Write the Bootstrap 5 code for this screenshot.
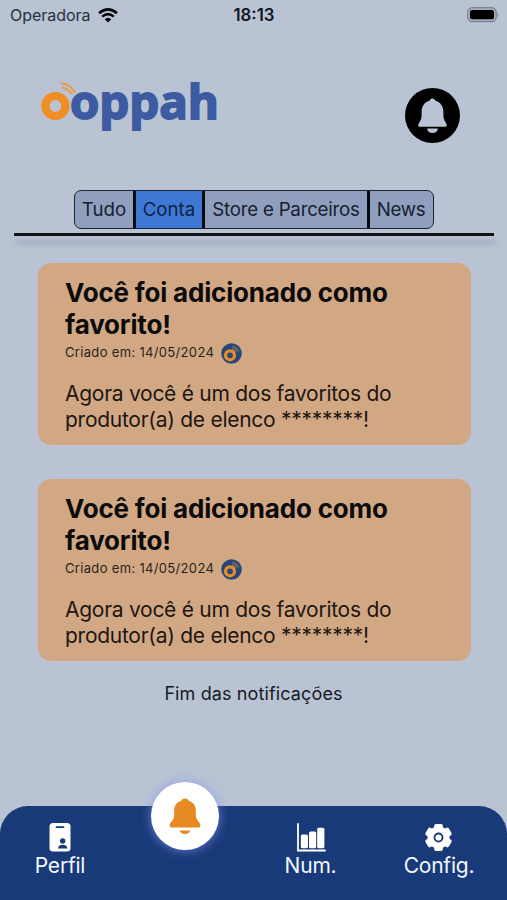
<!DOCTYPE html>
<html lang="pt-BR">
<head>
<meta charset="utf-8">
<meta name="viewport" content="width=device-width, initial-scale=1">
<title>Notificações</title>
<link href="https://cdn.jsdelivr.net/npm/bootstrap@5.3.0/dist/css/bootstrap.min.css" rel="stylesheet">
<style>
body{font-family:Inter,"Liberation Sans",sans-serif;background:#b9c3d3;color:#0b1119;width:507px;height:900px;overflow:hidden}
svg{display:block;flex:none}
.status-bar{height:30px;padding:0 8px 0 10px;font-size:16px;line-height:30px}
.status-bar>div{flex:1 1 0}
.carrier{letter-spacing:-.02px;color:#27303c}
.wifi{margin-left:7px}
.clock{font-weight:600;font-size:16.8px;text-align:center;color:#10151d;padding-right:1px}
.brand-row{height:160px;padding:24px 47px 0 38px}
.alert-icon{margin-top:34px}
.tabs-row{height:39px;margin-left:74px;width:360px}
.tabs-box{border:1.5px solid #1b2531;border-radius:7px;overflow:hidden;background:#909fbe;width:360px}
.tab-item{font-size:18.7px;line-height:37px;text-align:center;border-left:3px solid #05090f;color:#152031;white-space:nowrap;background:none;padding:0}
.tab-item:first-child{border-left:0;width:58px}
.tab-2{width:69px;background:#3c78d4;color:#0f2343}
.tab-3{width:165px;letter-spacing:-.22px}
.tab-4{width:65px;letter-spacing:-.3px}
.rule{height:3px;margin:4px 13px 0 14px;background:#0c1418;box-shadow:2px 8px 4px rgba(130,138,160,.5)}
.notice{width:433px;height:182px;margin-left:38px;border-radius:13px;background:#d2a884;padding:14px 27px 0;color:#0b0b0c}
.notice-title{font-size:26px;font-weight:700;line-height:31.5px;letter-spacing:-.18px;margin:0;white-space:nowrap}
.notice-date{font-size:13px;letter-spacing:.33px;height:25px;color:#2a1f18}
.notice-icon{margin:2px 0 0 7px}
.notice-text{font-size:21px;line-height:26px;letter-spacing:-.27px;margin:16px 0 0;white-space:nowrap;color:#1d1611}
.gap-first{margin-top:27px}
.gap-next{margin-top:34px}
.end-text{font-size:18px;line-height:24px;letter-spacing:.12px;margin-top:21px;text-align:center;color:#151b24}
.bottom-bar{height:94px;border-radius:28px 28px 0 0;background:#193a78;color:#f3f7ff;font-size:21px}
.bar-item{padding-top:16px;line-height:28px;letter-spacing:-.2px}
.bell-button{width:68px;height:68px;border-radius:50%;background:#fff;box-shadow:0 0 11px rgba(135,150,245,.75);margin-top:-24px}
.bar-grid{grid-template-columns:120px 130px 121px 136px}
</style>
</head>
<body class="d-flex flex-column">
<header>
  <div class="status-bar d-flex">
    <div class="carrier d-flex align-items-center"><span>Operadora</span>
      <svg class="wifi" width="20" height="15" viewBox="0 0 20 15" fill="none" stroke="#05080c" stroke-width="2.5"><path d="M1 5.200Q10-2.500 19 5.200M4.200 8.600Q10 3.700 15.800 8.600"/><path d="M6.700 11.200Q10 8.200 13.300 11.200L10 14.600Z" fill="#05080c" stroke="none"/></svg>
    </div>
    <div class="clock">18:13</div>
    <div class="d-flex justify-content-end align-items-center">
      <svg width="33" height="16" viewBox="0 0 33 16"><rect x="1.700" y=".7" width="28.500" height="14" rx="4.200" fill="#a5adbb" stroke="#6f7784"/><rect x="4" y="3" width="24" height="9.300" rx="2" fill="#000"/><path d="M31.500 5.500q2 2.500 0 5z" fill="#7d8592"/></svg>
    </div>
  </div>
  <div class="brand-row d-flex justify-content-between">
    <svg width="200" height="100" viewBox="38 54 200 100" role="img" aria-label="ooppah">
      <text x="70" y="118.500" font-family="Open Sans,Noto Sans,sans-serif" font-weight="700" font-size="47" fill="#3c5ba0" stroke="#3c5ba0" stroke-width="1.800" textLength="149" lengthAdjust="spacingAndGlyphs">oppah</text>
      <circle cx="55.400" cy="106" r="10" fill="none" stroke="#ee8e25" stroke-width="8.200"/>
      <g fill="none" stroke="#e89a4a" stroke-width="1.900"><path d="M61 83q9 1 14 9.500M62 87.500q6.500 1.500 10 7"/></g>
    </svg>
    <svg class="alert-icon" width="55" height="55" viewBox="0 0 55 55"><circle cx="27.500" cy="27.500" r="27.500"/><path fill="#b9c3d3" d="M27.500 10.500c1.800 0 2.500 1 2.900 2.200 5 1.300 8 5.500 8 11v4c0 3 1.200 5.200 3 8 .9 1.700.3 3-1.300 3H14.900c-1.600 0-2.200-1.300-1.300-3 1.800-2.800 3-5 3-8v-4c0-5.500 3-9.700 8-11 .4-1.200 1.100-2.200 2.900-2.200zM22 40.500h11q-1 4.500-5.500 4.500T22 40.500z"/></svg>
  </div>
  <nav class="tabs-row">
    <div class="tabs-box d-flex">
      <button class="tab-item border-top-0 border-end-0 border-bottom-0 border-start-0">Tudo</button>
      <button class="tab-item tab-2 border-top-0 border-end-0 border-bottom-0">Conta</button>
      <button class="tab-item tab-3 border-top-0 border-end-0 border-bottom-0">Store e Parceiros</button>
      <button class="tab-item tab-4 border-top-0 border-end-0 border-bottom-0">News</button>
    </div>
  </nav>
  <div class="rule"></div>
</header>
<main class="flex-grow-1">
  <article class="notice gap-first">
    <h2 class="notice-title">Você foi adicionado como<br>favorito!</h2>
    <div class="notice-date d-flex align-items-center"><span>Criado em: 14/05/2024</span>
      <svg class="notice-icon" width="21" height="21" viewBox="0 0 21 21"><circle cx="10.500" cy="10.500" r="10.300" fill="#294679"/><circle cx="9" cy="12.300" r="4.500" fill="none" stroke="#e48b2c" stroke-width="3.200"/><path d="M11 3.500q5 .5 6.500 5M11 5.800q3 .4 4.500 3.200" fill="none" stroke="#a77559" stroke-width="1.100"/></svg></div>
    <p class="notice-text">Agora você é um dos favoritos do<br>produtor(a) de elenco ********!</p>
  </article>
  <article class="notice gap-next">
    <h2 class="notice-title">Você foi adicionado como<br>favorito!</h2>
    <div class="notice-date d-flex align-items-center"><span>Criado em: 14/05/2024</span>
      <svg class="notice-icon" width="21" height="21" viewBox="0 0 21 21"><circle cx="10.500" cy="10.500" r="10.300" fill="#294679"/><circle cx="9" cy="12.300" r="4.500" fill="none" stroke="#e48b2c" stroke-width="3.200"/><path d="M11 3.500q5 .5 6.500 5M11 5.800q3 .4 4.500 3.200" fill="none" stroke="#a77559" stroke-width="1.100"/></svg></div>
    <p class="notice-text">Agora você é um dos favoritos do<br>produtor(a) de elenco ********!</p>
  </article>
  <p class="end-text mb-0">Fim das notificações</p>
</main>
<nav class="bottom-bar bar-grid d-grid">
  <div class="bar-item d-flex flex-column align-items-center">
    <svg width="22" height="30" viewBox="0 0 22 30"><rect x=".5" y="1" width="21" height="28.500" rx="3.500" fill="#fff"/><path d="M7.500 5.200h7" stroke="#193a78" stroke-width="1.800" stroke-linecap="round"/><circle cx="13.700" cy="19" r="2.700" fill="#193a78"/><path d="M9 26.500q.3-3.800 4.700-3.800t4.700 3.800z" fill="#193a78"/></svg>
    <span>Perfil</span>
  </div>
  <div class="d-flex justify-content-center">
    <div class="bell-button d-flex align-items-center justify-content-center">
      <svg width="32" height="38" viewBox="0 0 32 38"><path fill="#e68a21" d="M16 1.500c2 0 3 1 3.800 2.200 4.500 1.500 7 5 7 9.300v4.500c0 3.500 1.400 5.500 3.600 8.200 1.600 2 1.200 4.800-.9 4.800h-27c-2.100 0-2.500-2.800-.9-4.800 2.200-2.700 3.600-4.700 3.600-8.200V13c0-4.300 2.500-7.800 7-9.300C13 2.500 14 1.500 16 1.500zM10.500 33.500h11q-1.500 3.500-5.500 3.500t-5.500-3.500z"/></svg>
    </div>
  </div>
  <div class="bar-item d-flex flex-column align-items-center">
    <svg width="30" height="30" viewBox="0 0 30 30"><path d="M2 2v26.500h27" fill="none" stroke="#fff" stroke-width="1.800" stroke-linecap="round"/><g fill="#fff"><rect x="4.800" y="12.500" width="7.200" height="13.800" rx="1.500"/><rect x="13" y="9.500" width="7.200" height="16.800" rx="1.500"/><rect x="21.200" y="5.800" width="7.200" height="20.500" rx="1.500"/></g></svg>
    <span>Num.</span>
  </div>
  <div class="bar-item d-flex flex-column align-items-center">
    <svg width="30" height="30" viewBox="0 0 30 30"><g fill="#fff"><circle cx="14.500" cy="15.500" r="11"/><rect x="10.100" y="2" width="8.800" height="27" rx="2"/><rect x="10.100" y="2" width="8.800" height="27" rx="2" transform="rotate(60 14.500 15.500)"/><rect x="10.100" y="2" width="8.800" height="27" rx="2" transform="rotate(120 14.500 15.500)"/></g><circle cx="14.500" cy="15.500" r="4" fill="#fff" stroke="#193a78" stroke-width="1.800"/></svg>
    <span>Config.</span>
  </div>
</nav>
<script src="https://cdn.jsdelivr.net/npm/bootstrap@5.3.0/dist/js/bootstrap.bundle.min.js"></script>
</body>
</html>
